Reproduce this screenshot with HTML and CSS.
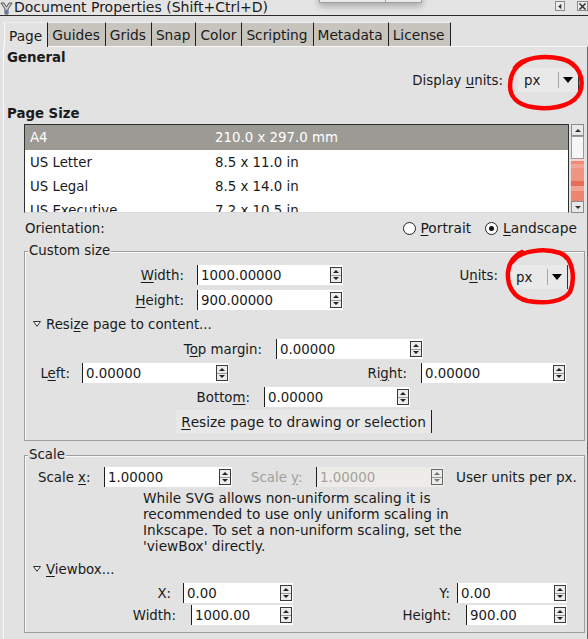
FILE: index.html
```html
<!DOCTYPE html>
<html>
<head>
<meta charset="utf-8">
<link rel="stylesheet" href="styles.css">
</head>
<body>
<div class="win">
  <div class="titlebar">
    <svg class="appicon" width="13" height="14" viewBox="0 0 13 14">
      <path d="M1 2 L4 2 L6.5 6 L9 2 L12 2 L8 8 L8 13 L5 13 L5 8 Z" fill="#cfcfcf" stroke="#555" stroke-width="1"/>
      <rect x="5.5" y="9" width="2" height="3.5" fill="#3a6fc4"/>
    </svg>
    <span class="title">Document Properties (Shift+Ctrl+D)</span>
    <span class="tbtn tb-iconify"><svg width="9" height="9" viewBox="0 0 9 9"><path d="M6 1.5 L2.5 4.5 L6 7.5 Z" fill="#333"/></svg></span>
    <span class="tbtn tb-close"><svg width="9" height="9" viewBox="0 0 9 9"><path d="M1.5 1.5 L7.5 7.5 M7.5 1.5 L1.5 7.5" stroke="#333" stroke-width="1.6"/></svg></span>
  </div>
  <div class="popup"><span class="pp-a"></span><span class="pp-b"></span></div>

  <div class="tabs">
    <span class="tab active">Page</span>
    <span class="tab">Guides</span>
    <span class="tab">Grids</span>
    <span class="tab">Snap</span>
    <span class="tab">Color</span>
    <span class="tab">Scripting</span>
    <span class="tab">Metadata</span>
    <span class="tab">License</span>
  </div>

  <div class="page">
    <div class="heading">General</div>
    <div class="units-row">
      <span class="lbl">Display <u>u</u>nits:</span>
      <span class="combo c-display"><span class="cv">px</span><span class="csep"></span><span class="carrow"></span></span>
    </div>

    <div class="heading ps">Page Size</div>
    <div class="listwrap">
      <div class="list">
        <div class="lrow sel"><span class="c1">A4</span><span>210.0 x 297.0 mm</span></div>
        <div class="lrow"><span class="c1">US Letter</span><span>8.5 x 11.0 in</span></div>
        <div class="lrow"><span class="c1">US Legal</span><span>8.5 x 14.0 in</span></div>
        <div class="lrow"><span class="c1">US Executive</span><span>7.2 x 10.5 in</span></div>
      </div>
      <div class="vscroll">
        <span class="sbtn sup"></span>
        <span class="thumb"></span>
        <span class="trough"></span>
        <span class="sbtn sdn"></span>
      </div>
    </div>

    <div class="orient">
      <span class="olabel">Orientation:</span>
      <span class="radio"><span class="rc"></span><span><u>P</u>ortrait</span></span>
      <span class="radio r2"><span class="rc on"></span><span><u>L</u>andscape</span></span>
    </div>

    <fieldset class="frame custom">
      <legend>Custom size</legend>
      <div class="size-grid">
        <span class="cell c-w"><u>W</u>idth:</span>
        <span class="spin w146"><span class="val">1000.00000</span><span class="sb"><i class="up"></i><i class="dn"></i></span></span>
        <span class="cell c-units">U<u>n</u>its:</span>
        <span class="combo c-units-box"><span class="cv">px</span><span class="csep"></span><span class="carrow"></span></span>
        <span class="cell c-w r2"><u>H</u>eight:</span>
        <span class="spin w146 r2"><span class="val">900.00000</span><span class="sb"><i class="up"></i><i class="dn"></i></span></span>
      </div>

      <div class="expander"><svg class="tri" width="8" height="6" viewBox="0 0 8 6"><path d="M0.5 0.5 L7.5 0.5 L4 5.3 Z" fill="#f4f4f4" stroke="#333" stroke-width="1"/></svg><span>Resi<u>z</u>e page to content...</span></div>

      <div class="mrow">
        <span class="cell l-top">T<u>o</u>p margin:</span>
        <span class="spin w147"><span class="val">0.00000</span><span class="sb"><i class="up"></i><i class="dn"></i></span></span>
      </div>
      <div class="mrow">
        <span class="cell l-left">L<u>e</u>ft:</span>
        <span class="spin w147"><span class="val">0.00000</span><span class="sb"><i class="up"></i><i class="dn"></i></span></span>
        <span class="cell l-right">Ri<u>g</u>ht:</span>
        <span class="spin w145"><span class="val">0.00000</span><span class="sb"><i class="up"></i><i class="dn"></i></span></span>
      </div>
      <div class="mrow">
        <span class="cell l-bottom">Botto<u>m</u>:</span>
        <span class="spin w146"><span class="val">0.00000</span><span class="sb"><i class="up"></i><i class="dn"></i></span></span>
      </div>
      <div class="btnrow"><span class="button"><u>R</u>esize page to drawing or selection</span></div>
    </fieldset>

    <fieldset class="frame scale">
      <legend>Scale</legend>
      <div class="scalerow">
        <span class="cell sx">Scale <u>x</u>:</span>
        <span class="spin w128"><span class="val">1.00000</span><span class="sb"><i class="up"></i><i class="dn"></i></span></span>
        <span class="cell sy dis">Scale <u>y</u>:</span>
        <span class="spin w128 disabled"><span class="val">1.00000</span><span class="sb"><i class="up"></i><i class="dn"></i></span></span>
        <span class="uu">User units per px.</span>
      </div>
      <p class="note">While SVG allows non-uniform scaling it is<br>recommended to use only uniform scaling in<br>Inkscape. To set a non-uniform scaling, set the<br>'viewBox' directly.</p>

      <div class="expander vb"><svg class="tri" width="8" height="6" viewBox="0 0 8 6"><path d="M0.5 0.5 L7.5 0.5 L4 5.3 Z" fill="#f4f4f4" stroke="#333" stroke-width="1"/></svg><span><u>V</u>iewbox...</span></div>

      <div class="vrow first">
        <span class="cell v-x">X:</span>
        <span class="spin w110"><span class="val">0.00</span><span class="sb"><i class="up"></i><i class="dn"></i></span></span>
        <span class="cell v-y">Y:</span>
        <span class="spin w110"><span class="val">0.00</span><span class="sb"><i class="up"></i><i class="dn"></i></span></span>
      </div>
      <div class="vrow">
        <span class="cell v-w">Width:</span>
        <span class="spin w102"><span class="val">1000.00</span><span class="sb"><i class="up"></i><i class="dn"></i></span></span>
        <span class="cell v-h">Height:</span>
        <span class="spin w101"><span class="val">900.00</span><span class="sb"><i class="up"></i><i class="dn"></i></span></span>
      </div>
    </fieldset>
  </div>

  <svg class="marks" width="588" height="639" viewBox="0 0 588 639">
    <path d="M515 68 C522 57, 545 55, 562 59 C578 63, 585 78, 580 92 C575 104, 558 109, 540 108 C522 107, 510 100, 510 86 C510 74, 516 64, 530 59" fill="none" stroke="#ff0000" stroke-width="4.5" stroke-linecap="round"/>
    <path d="M512 262 C520 250, 545 248, 560 253 C574 258, 575 280, 570 292 C563 302, 545 304, 528 301 C513 298, 507 285, 508 272 C509 262, 514 256, 522 252" fill="none" stroke="#ff0000" stroke-width="4.5" stroke-linecap="round"/>
  </svg>
</div>
</body>
</html>
```

FILE: styles.css
```css
html, body {
  margin: 0;
  padding: 0;
}
body {
  width: 588px;
  height: 639px;
  overflow: hidden;
  background: #e2e2e2;
  font-family: "DejaVu Sans", "Noto Sans", sans-serif;
  font-size: 13.33px;
  color: #1a1a1a;
}
u { text-decoration: underline; text-underline-offset: 2px; }

.win {
  position: relative;
  width: 588px;
  height: 639px;
  overflow: hidden;
}

/* title bar */
.titlebar {
  display: flex;
  align-items: center;
  height: 15px;
  border-bottom: 1px solid #2a2a2a;
  background: #e4e4e4;
}
.appicon { flex: none; margin-top: 1px; }
.title {
  margin-left: 1px;
  font-size: 14px;
  line-height: 15px;
  white-space: nowrap;
}
.tbtn {
  display: flex;
  align-items: center;
  justify-content: center;
  width: 10px;
  height: 10px;
  border: 1px solid #8a8a8a;
  box-sizing: border-box;
  background: #ececec;
  align-self: flex-start;
  margin-top: 1px;
}
.tb-iconify { margin-left: auto; }
.tb-close { margin-left: 12px; width: 11px; }

.popup {
  position: absolute;
  left: 319px;
  top: -12px;
  width: 103px;
  height: 15px;
  display: flex;
  background: #e9e9e9;
  border: 1px solid #a0a0a0;
  box-sizing: border-box;
  box-shadow: 0 3px 7px rgba(0,0,0,0.28);
}
.pp-a { width: 65px; border-right: 1px solid #a0a0a0; }

/* tabs */
.tabs {
  display: flex;
  margin-top: 6px;
  margin-left: 4px;
  height: 24px;
  position: relative;
  z-index: 1;
  font-size: 13.75px;
}
.tab {
  display: flex;
  align-items: center;
  padding: 1px 5px 0 4px;
  background: #c6c4bd;
  border-top: 1px solid #eeeeee;
  border-right: 1px solid #1e1e1e;
  box-sizing: border-box;
  height: 24px;
  white-space: nowrap;
}
.tab.active {
  background: #e2e2e2;
  border-left: 1px solid #fafafa;
  height: 25px;
}

/* page */
.page {
  margin-left: 3px;
  width: 585px;
  height: 593px;
  box-sizing: border-box;
  border-left: 1px solid #fafafa;
  border-top: 1px solid #f6f6f6;
  border-right: 1px solid #6a6a6a;
  padding-left: 3px;
}
.heading {
  font-weight: bold;
  line-height: 16px;
  height: 16px;
  margin-top: 3px;
}
.heading.ps { margin-top: 12px; }

.units-row {
  display: flex;
  align-items: center;
  justify-content: flex-end;
  height: 28px;
  padding-right: 8px;
}
.units-row .lbl { margin-right: 15px; }

.combo {
  display: inline-flex;
  align-items: center;
  height: 24px;
  box-sizing: border-box;
  background: #e9e9e9;
  border-right: 1px solid #333;
}
.combo .cv { flex: 1; padding-left: 6px; }
.combo .csep { width: 1px; height: 16px; background: #a8a8a8; }
.combo .carrow {
  width: 0;
  height: 0;
  border-left: 5px solid transparent;
  border-right: 5px solid transparent;
  border-top: 6px solid #000;
  margin: 0 5px 0 4px;
}
.c-display { width: 61px; }
.c-units-box { width: 58px; }

/* list */
.listwrap {
  display: flex;
  margin-top: 2px;
  margin-left: 17px;
  height: 89px;
}
.list {
  width: 545px;
  height: 89px;
  box-sizing: border-box;
  background: #fff;
  border: 1px solid #303030;
  border-bottom-color: #d8d8d8;
  overflow: hidden;
}
.lrow {
  display: flex;
  height: 24px;
  align-items: center;
  padding-left: 5px;
  white-space: nowrap;
}
.lrow.sel {
  background: #9c9a94;
  color: #fff;
  height: 25px;
}
.lrow .c1 { width: 185px; }

.vscroll {
  display: flex;
  flex-direction: column;
  width: 13px;
  margin-left: 2px;
  height: 89px;
  background: #d0d0d0;
}
.sbtn {
  height: 12px;
  box-sizing: border-box;
  border: 1px solid #8c8c8c;
  background: #e8e8e8;
  display: flex;
  align-items: center;
  justify-content: center;
}
.sbtn::after {
  content: "";
  width: 0;
  height: 0;
  border-left: 3px solid transparent;
  border-right: 3px solid transparent;
}
.sup::after { border-bottom: 3px solid #333; }
.sdn::after { border-top: 3px solid #333; }
.thumb {
  height: 23px;
  box-sizing: border-box;
  border: 1px solid #9a9a9a;
  background: #f6f6f6;
}
.trough {
  flex: 1;
  background:
    linear-gradient(to bottom,
      #f6d6cc 0, #f6d6cc 2px,
      #ee8a76 2px, #ee8a76 5px,
      #f3a595 5px, #f3a595 9px,
      #ef9582 9px, #ef9582 22px,
      #e96e5a 22px, #e96e5a 27px,
      #f2a392 27px, #f2a392 32px,
      #ec8470 32px);
}

/* orientation */
.orient {
  display: flex;
  align-items: center;
  height: 24px;
  margin-top: 3px;
  padding-left: 18px;
  padding-right: 10px;
}
.olabel { margin-right: auto; }
.radio { display: inline-flex; align-items: center; font-size: 13.75px; }
.radio.r2 { margin-left: 14px; }
.rc {
  width: 13px;
  height: 13px;
  box-sizing: border-box;
  border: 1px solid #222;
  border-radius: 50%;
  background: #fff;
  margin-right: 5px;
  display: flex;
  align-items: center;
  justify-content: center;
}
.rc.on::after {
  content: "";
  width: 5px;
  height: 5px;
  border-radius: 50%;
  background: #111;
}

/* frames */
.frame {
  margin: 0 0 0 17px;
  padding: 0 0 7px 0;
  width: 561px;
  box-sizing: border-box;
  border: 1px solid #9e9e9e;
  box-shadow: inset 1px 1px 0 #fbfbfb;
  min-inline-size: 0;
}
.frame legend {
  padding: 0 1px;
  margin-left: 3px;
  line-height: 14px;
  background: #e2e2e2;
}
.frame.custom { margin-top: 4px; }
.frame.scale { margin-top: 7px; }

.cell {
  text-align: right;
  box-sizing: border-box;
  flex: none;
  white-space: nowrap;
}

.spin {
  display: inline-flex;
  align-items: center;
  height: 20px;
  box-sizing: border-box;
  background: #fff;
  border-left: 1px solid #1e1e1e;
  padding-left: 3px;
  flex: none;
}
.spin .val { flex: 1; white-space: nowrap; }
.sb {
  width: 12px;
  height: 16px;
  box-sizing: border-box;
  border: 1px solid #3a3a3a;
  background: #ececec;
  display: flex;
  flex-direction: column;
  margin-right: 1px;
}
.sb i {
  flex: 1;
  display: flex;
  align-items: center;
  justify-content: center;
}
.sb .up { border-bottom: 1px solid #9a9a9a; }
.sb i::after {
  content: "";
  width: 0;
  height: 0;
  border-left: 3px solid transparent;
  border-right: 3px solid transparent;
}
.sb .up::after { border-bottom: 3px solid #222; }
.sb .dn::after { border-top: 3px solid #222; }

.spin.disabled { background: #eeece8; color: #a2a19c; }
.spin.disabled .sb { border-color: #6a6a6a; background: #eeece8; }
.spin.disabled .sb .up::after { border-bottom-color: #777; }
.spin.disabled .sb .dn::after { border-top-color: #777; }
.dis { color: #a2a19c; }

.w146 { width: 146px; }
.w147 { width: 147px; }
.w145 { width: 145px; }
.w128 { width: 128px; }
.w110 { width: 110px; }
.w102 { width: 102px; }
.w101 { width: 101px; }

/* custom size grid */
.size-grid {
  display: grid;
  grid-template-columns: 172px 146px 167px 58px;
  grid-template-rows: 20px 20px;
  row-gap: 5px;
  margin-top: 7px;
  align-items: center;
}
.c-w { padding-right: 13px; grid-column: 1; }
.size-grid .spin { grid-column: 2; }
.c-units { padding-right: 12px; grid-column: 3; grid-row: 1; }
.c-units-box { grid-column: 4; grid-row: 1; align-self: start; }
.size-grid .r2 { grid-row: 2; }

.expander {
  display: flex;
  align-items: center;
  height: 22px;
  margin-top: 3px;
  padding-left: 8px;
}
.expander .tri { margin-right: 5px; flex: none; }
.expander.vb { margin-top: 4px; }

.mrow {
  display: flex;
  align-items: center;
  height: 20px;
  margin-top: 4px;
}
.l-top { width: 251px; padding-right: 14px; }
.l-left { width: 57px; padding-right: 12px; }
.l-right { width: 192px; padding-right: 14px; }
.l-bottom { width: 239px; padding-right: 14px; }

.btnrow {
  display: flex;
  margin-top: 3px;
  padding-left: 151px;
}
.button {
  display: flex;
  align-items: center;
  justify-content: center;
  width: 256px;
  height: 23px;
  box-sizing: border-box;
  background: #e8e8e8;
  border-right: 1px solid #1e1e1e;
  white-space: nowrap;
  font-size: 13.7px;
}

/* scale frame */
.scalerow {
  display: flex;
  align-items: center;
  height: 20px;
  margin-top: 5px;
}
.sx { width: 79px; text-align: left; padding-left: 13px; }
.sy { width: 84px; text-align: left; padding-left: 19px; }
.uu { margin-left: 12px; white-space: nowrap; font-size: 13.6px; }

.note {
  margin: 3px 0 0 0;
  padding-left: 118px;
  line-height: 16px;
  white-space: nowrap;
  font-size: 13.7px;
}

.vrow {
  display: flex;
  align-items: center;
  height: 20px;
  margin-top: 2px;
}
.vrow.first { margin-top: 3px; }
.v-x { width: 158px; padding-right: 12px; }
.v-y { width: 164px; padding-right: 7px; }
.v-w { width: 166px; padding-right: 15px; }
.v-h { width: 173px; padding-right: 15px; }

/* red annotation marks */
.marks {
  position: absolute;
  left: 0;
  top: 0;
  pointer-events: none;
}
```
